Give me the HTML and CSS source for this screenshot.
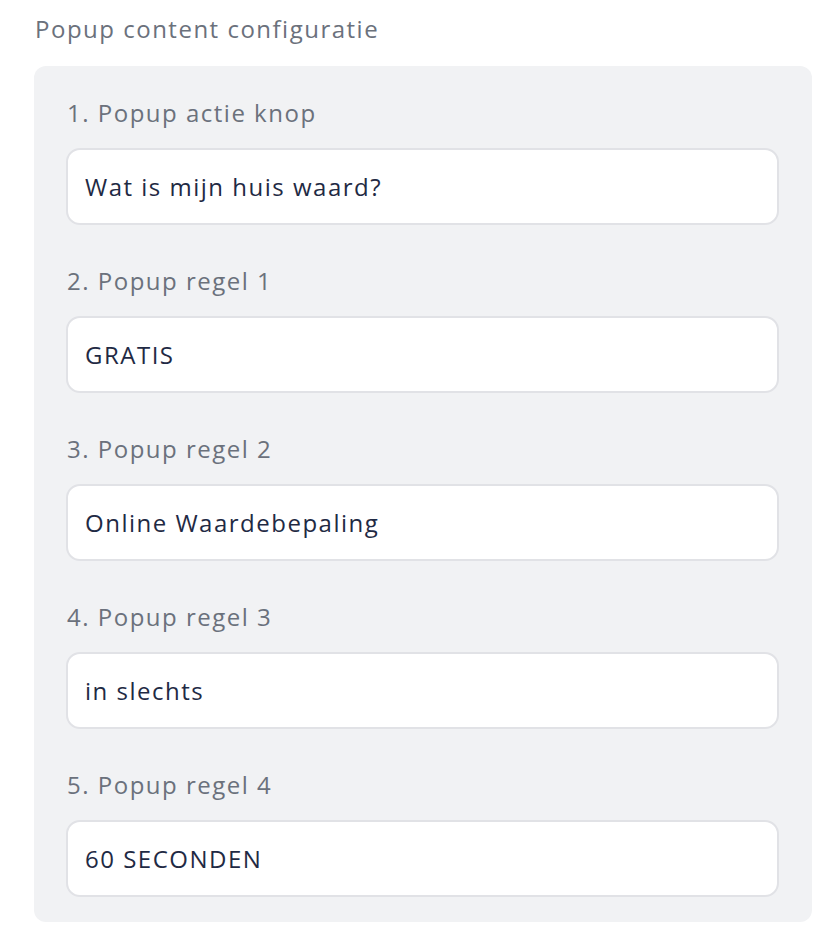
FILE: index.html
```html
<!DOCTYPE html>
<html>
<head>
  <meta charset="UTF-8">
  <title>Popup content configuratie</title>
  <link rel="stylesheet" href="styles.css">
</head>
<body>
  <h3 class="section-title">Popup content configuratie</h3>

  <div class="panel">
    <div class="field">
      <label for="btnText">1. Popup actie knop</label>
      <input id="btnText" type="text" value="Wat is mijn huis waard?">
    </div>

    <div class="field">
      <label for="line1">2. Popup regel 1</label>
      <input id="line1" type="text" value="GRATIS">
    </div>

    <div class="field">
      <label for="line2">3. Popup regel 2</label>
      <input id="line2" type="text" value="Online Waardebepaling">
    </div>

    <div class="field">
      <label for="line3">4. Popup regel 3</label>
      <input id="line3" type="text" value="in slechts">
    </div>

    <div class="field">
      <label for="line4">5. Popup regel 4</label>
      <input id="line4" type="text" value="60 SECONDEN">
    </div>
  </div>
</body>
</html>
```

FILE: styles.css
```css
:root {
  --panel-bg: #f1f2f4;
  --border-color: #e1e2e6;
  --label-color: #6b717c;
  --text-color: #1f2a44;
}

html, body {
  margin: 0;
  padding: 0;
  background: #fff;
}

body {
  font-family: "Open Sans", Lato, sans-serif;
  letter-spacing: 1.5px;
  padding: 13px 22px 14px 34px;
}

.section-title {
  margin: 0 0 21px 1px;
  font-size: 24px;
  font-weight: 400;
  line-height: 32px;
  color: var(--label-color);
}

.panel {
  background: var(--panel-bg);
  border-radius: 12px;
  padding: 31px 33px 25px 32px;
  display: flex;
  flex-direction: column;
  gap: 40px;
}

.field label {
  display: block;
  font-size: 24px;
  line-height: 32px;
  margin: 0 0 19px 1px;
  color: var(--label-color);
}

.field input {
  display: block;
  width: 100%;
  height: 77px;
  box-sizing: border-box;
  padding: 0 17px;
  border: 2px solid var(--border-color);
  border-radius: 14px;
  background: #fff;
  font-family: inherit;
  font-size: 24px;
  letter-spacing: inherit;
  color: var(--text-color);
  outline: none;
}
```
